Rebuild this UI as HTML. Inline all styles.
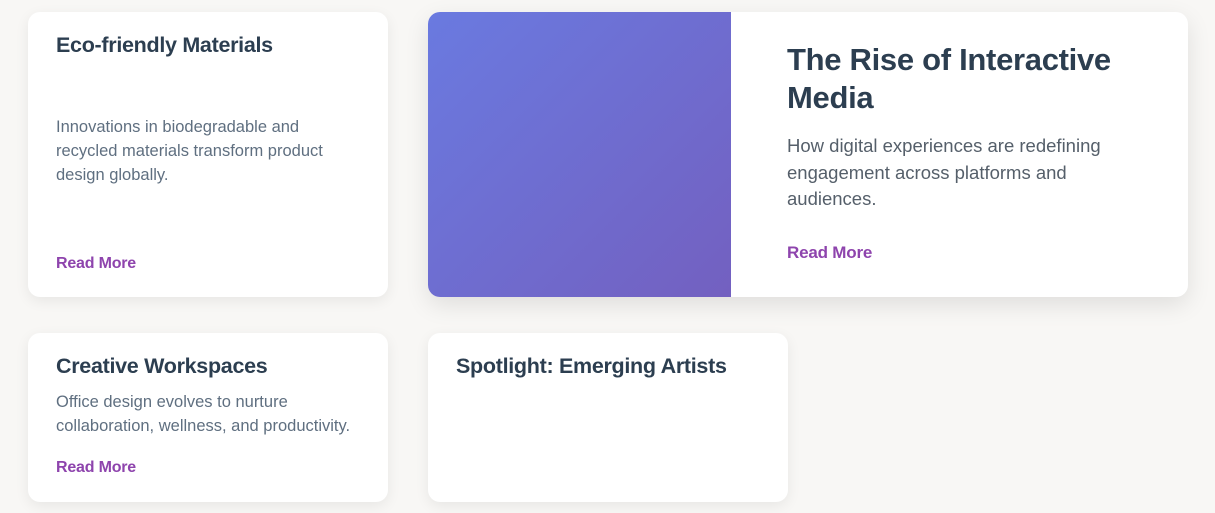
<!DOCTYPE html>
<html><head><meta charset="utf-8"><style>
body{margin:0;width:1215px;height:513px;background:#f8f7f5;font-family:"Liberation Sans",sans-serif;position:relative;overflow:hidden}
.card{position:absolute;background:#fff;border-radius:12px;box-shadow:0 4px 14px rgba(0,0,0,0.07);overflow:hidden}
.t{position:absolute;color:#2c3e50;font-size:21.5px;font-weight:bold;white-space:nowrap;letter-spacing:-0.3px}
.d{position:absolute;color:#5f6f80;font-size:16.5px;line-height:24px;white-space:nowrap}
.r{position:absolute;color:#8e44ad;font-size:16px;font-weight:bold;white-space:nowrap;letter-spacing:-0.2px}
</style></head><body>
<div class="card" style="left:28px;top:12px;width:360px;height:285px">
 <div class="t" style="left:28px;top:21px">Eco-friendly Materials</div>
 <div class="d" style="left:28px;top:103px">Innovations in biodegradable and<br>recycled materials transform product<br>design globally.</div>
 <div class="r" style="left:28px;top:243px">Read More</div>
</div>
<div class="card" style="left:428px;top:12px;width:760px;height:285px;box-shadow:0 8px 24px rgba(0,0,0,0.1)">
 <div style="position:absolute;left:0;top:0;width:303px;height:285px;background:linear-gradient(135deg,#6a7ae0,#7360c0)"></div>
 <div class="t" style="left:359px;top:29px;font-size:31px;line-height:38px">The Rise of Interactive<br>Media</div>
 <div class="d" style="left:359px;top:121px;font-size:18.5px;line-height:26.5px;color:#555f6a">How digital experiences are redefining<br>engagement across platforms and<br>audiences.</div>
 <div class="r" style="left:359px;top:231px;font-size:17px">Read More</div>
</div>
<div class="card" style="left:28px;top:333px;width:360px;height:169px">
 <div class="t" style="left:28px;top:21px">Creative Workspaces</div>
 <div class="d" style="left:28px;top:57px">Office design evolves to nurture<br>collaboration, wellness, and productivity.</div>
 <div class="r" style="left:28px;top:126px">Read More</div>
</div>
<div class="card" style="left:428px;top:333px;width:360px;height:169px">
 <div class="t" style="left:28px;top:21px">Spotlight: Emerging Artists</div>
</div>
</body></html>
